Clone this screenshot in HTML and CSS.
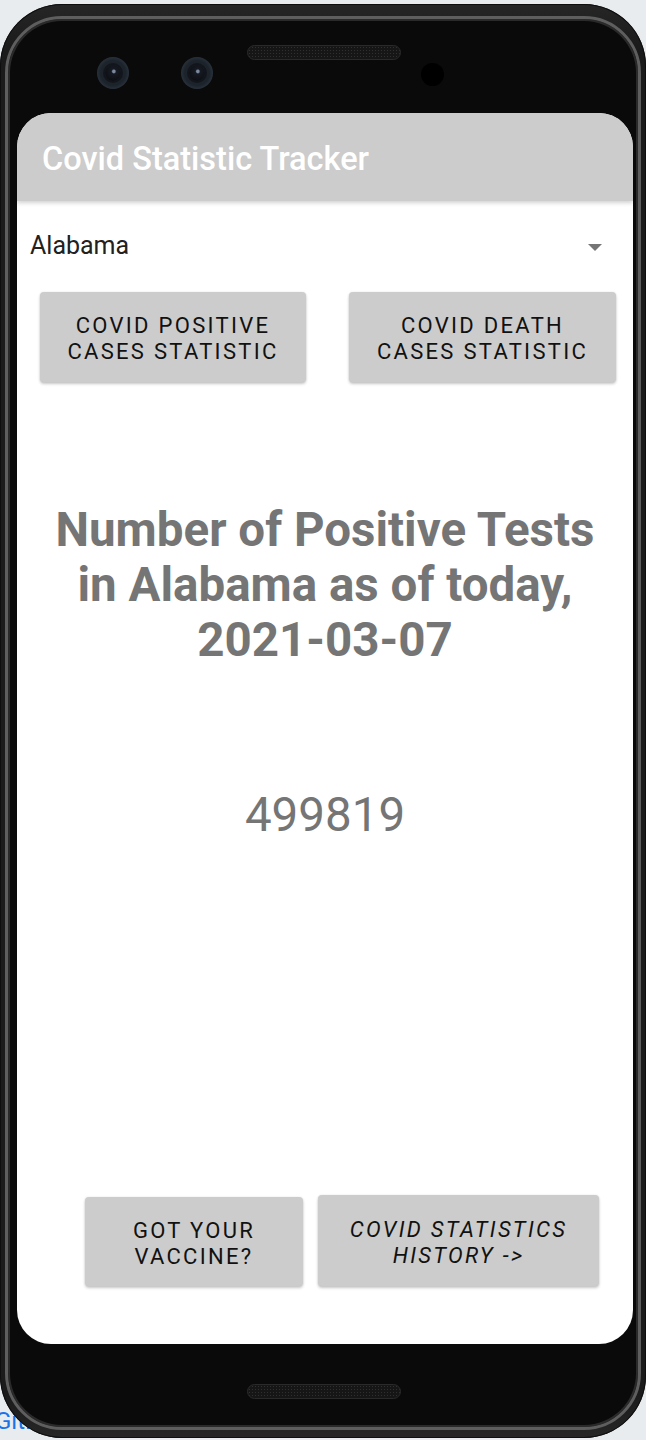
FILE: index.html
```html
<!DOCTYPE html>
<html lang="en">
<head>
<meta charset="utf-8">
<title>Covid Statistic Tracker</title>
<link rel="stylesheet" href="styles.css">
</head>
<body>
<a class="backlink" href="#">GitHub</a>
<div class="phone">
  <div class="bezel">
    <div class="top-hw">
      <div class="cam cam-1"><span class="lens"></span></div>
      <div class="cam cam-2"><span class="lens"></span></div>
      <div class="grill grill-top"></div>
      <div class="sensor"></div>
    </div>
    <div class="screen">
      <header class="appbar"><h1 class="app-title">Covid Statistic Tracker</h1></header>
      <div class="spinner">
        <span class="spinner-value">Alabama</span>
        <svg class="spinner-arrow" width="14" height="7" viewBox="0 0 14 7"><path d="M0 0h14L7 7z" fill="#757575"/></svg>
      </div>
      <div class="top-row">
        <button class="btn btn-positive">COVID POSITIVE<br>CASES STATISTIC</button>
        <button class="btn btn-death">COVID DEATH<br>CASES STATISTIC</button>
      </div>
      <h2 class="headline">Number of Positive Tests<br>in Alabama as of today,<br>2021-03-07</h2>
      <div class="count">499819</div>
      <div class="bottom-row">
        <button class="btn btn-vaccine">GOT YOUR<br>VACCINE?</button>
        <button class="btn btn-history">COVID STATISTICS<br>HISTORY -&gt;</button>
      </div>
    </div>
    <div class="bottom-hw">
      <div class="grill grill-bottom"></div>
    </div>
  </div>
</div>
</body>
</html>
```

FILE: styles.css
```css
html, body {
  margin: 0;
  padding: 0;
}

body {
  background: #e8ecef;
  height: 1440px;
  overflow: hidden;
  padding-top: 4px;
  box-sizing: border-box;
  font-family: Roboto, "Noto Sans", "Liberation Sans", sans-serif;
  position: relative;
}

.backlink {
  position: absolute;
  left: -5px;
  top: 1407px;
  font-size: 24px;
  color: #1a73e8;
  text-decoration: none;
  z-index: 0;
}

.phone {
  position: relative;
  z-index: 1;
  width: 646px;
  height: 1434px;
  box-sizing: border-box;
  border-radius: 62px;
  background: linear-gradient(180deg, #262626 0%, #1b1b1b 3%, #1b1b1b 97%, #262626 100%);
  padding: 12px 5px 8px 5px;
  box-shadow: inset 0 0 0 1px #0e0e0e;
}

.bezel {
  height: 100%;
  box-sizing: border-box;
  border: 3px solid #5e5e5e;
  border-radius: 57px;
  background: #0a0a0a;
  display: flex;
  flex-direction: column;
  box-shadow: inset 0 0 0 2px #2a2a2a;
}

.top-hw {
  height: 94px;
  display: flex;
  align-items: flex-start;
  flex-shrink: 0;
}

.cam {
  width: 32px;
  height: 32px;
  border-radius: 50%;
  background: radial-gradient(circle, #1d232b 55%, #27303a 70%, #1a1f26 100%);
  display: flex;
  align-items: center;
  justify-content: center;
  margin-top: 38px;
}

.cam-1 { margin-left: 89px; }
.cam-2 { margin-left: 52px; }

.lens {
  width: 16px;
  height: 16px;
  border-radius: 50%;
  background: radial-gradient(circle at 55% 40%, #7c8aa0 0, #7c8aa0 1.2px, #161a22 2.5px, #08090d 100%);
  box-shadow: 0 0 0 2px #12161c;
}

.grill {
  width: 154px;
  height: 15px;
  box-sizing: border-box;
  border-radius: 8px;
  border: 1px solid #2a2a2a;
  background-color: #161616;
  background-image: radial-gradient(circle, #303030 0.7px, transparent 1px);
  background-size: 3px 3px;
}

.grill-top {
  margin-left: 34px;
  margin-top: 26px;
}

.sensor {
  width: 23px;
  height: 23px;
  border-radius: 50%;
  background: #000;
  margin-left: 20px;
  margin-top: 44px;
}

.screen {
  margin: 0 5px 0 9px;
  height: 1231px;
  flex-shrink: 0;
  background: #fff;
  border-radius: 34px;
  overflow: hidden;
  display: flex;
  flex-direction: column;
}

.appbar {
  height: 88px;
  flex-shrink: 0;
  background: #cccccc;
  display: flex;
  align-items: center;
  padding-left: 25px;
  position: relative;
  z-index: 1;
  box-shadow: 0 2px 4px rgba(0, 0, 0, 0.18);
}

.app-title {
  margin: 0;
  font-family: Roboto, sans-serif;
  font-weight: 500;
  font-size: 32.5px;
  color: #ffffff;
  padding-top: 3px;
}

.spinner {
  height: 88px;
  flex-shrink: 0;
  display: flex;
  align-items: center;
  justify-content: space-between;
  padding: 0 31px 0 13px;
}

.spinner-value {
  font-size: 25px;
  color: #212121;
}

.spinner-arrow {
  display: block;
  margin-top: 4px;
}

.top-row {
  display: flex;
  justify-content: space-between;
  padding: 0 17px 0 23px;
  margin-top: 3px;
  flex-shrink: 0;
}

.btn {
  border: none;
  background: #cccccc;
  border-radius: 4px;
  box-shadow: 0 2px 3px rgba(0, 0, 0, 0.22), 0 0 2px rgba(0, 0, 0, 0.1);
  font-family: Roboto, sans-serif;
  font-weight: 400;
  font-size: 22px;
  letter-spacing: 2.3px;
  line-height: 26px;
  color: #111111;
  text-align: center;
  padding: 4px 0 0;
  margin: 0;
}

.btn-positive { width: 266px; height: 90px; }
.btn-death { width: 267px; height: 90px; }

.headline {
  margin: 121px 0 0;
  font-family: Roboto, sans-serif;
  font-weight: 700;
  font-size: 47.5px;
  line-height: 55px;
  color: #757575;
  text-align: center;
}

.count {
  margin-top: 119px;
  font-size: 47.5px;
  line-height: 56px;
  color: #757575;
  text-align: center;
}

.bottom-row {
  margin-top: auto;
  display: flex;
  align-items: flex-end;
  gap: 15px;
  padding: 0 34px 58px 68px;
}

.btn-vaccine { width: 218px; height: 89px; }
.btn-history { width: 281px; height: 91px; font-style: italic; }

.bottom-hw {
  flex: 1;
  display: flex;
  justify-content: center;
  align-items: flex-start;
}

.grill-bottom {
  margin-top: 40px;
  margin-left: 2px;
}
```
